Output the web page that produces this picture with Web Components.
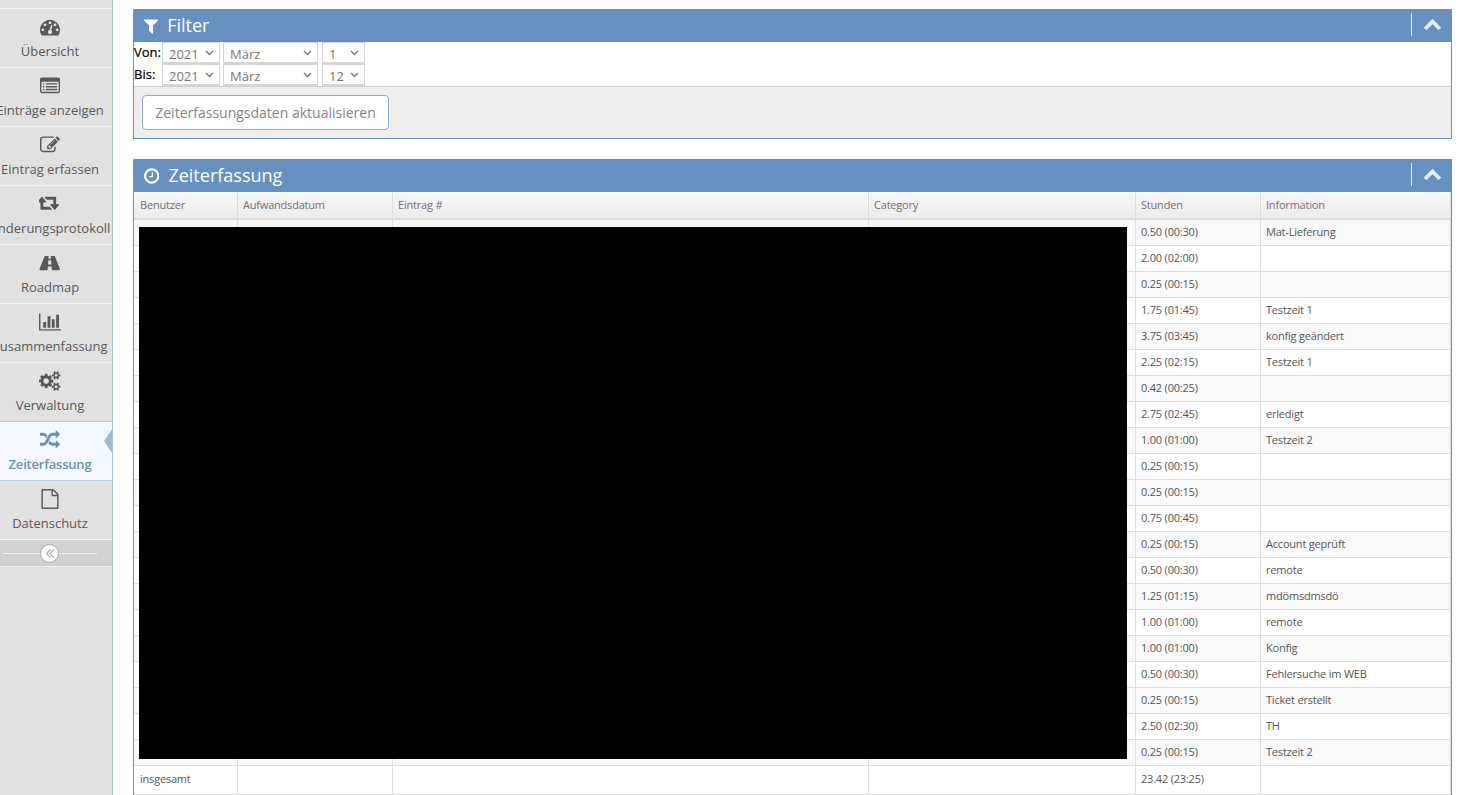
<!DOCTYPE html>
<html lang="de">
<head>
<meta charset="utf-8">
<title>Zeiterfassung</title>
<style>
  html, body { margin: 0; height: 100%; overflow: hidden; background: #fff; }
  body { font-family: "Open Sans", sans-serif; font-size: 13px; color: #393939; }
</style>
</head>
<body>
<app-layout>
  <side-bar slot="side">
    <nav-item icon="tachometer" label="Übersicht"></nav-item>
    <nav-item icon="listalt" label="Einträge anzeigen"></nav-item>
    <nav-item icon="edit" label="Eintrag erfassen"></nav-item>
    <nav-item icon="retweet" label="Änderungsprotokoll"></nav-item>
    <nav-item icon="road" label="Roadmap"></nav-item>
    <nav-item icon="chart" label="Zusammenfassung"></nav-item>
    <nav-item icon="cogs" label="Verwaltung"></nav-item>
    <nav-item icon="random" label="Zeiterfassung" active></nav-item>
    <nav-item icon="file" label="Datenschutz"></nav-item>
  </side-bar>
  <widget-box icon="filter" heading="Filter">
    <filter-form></filter-form>
  </widget-box>
  <widget-box icon="clock" heading="Zeiterfassung">
    <time-table></time-table>
  </widget-box>
</app-layout>

<script>
const ICONS = {
  tachometer: [1792, "M384 1152q0-53-37.5-90.5t-90.5-37.5-90.5 37.5-37.5 90.5 37.5 90.5 90.5 37.5 90.5-37.5 37.5-90.5zm192-448q0-53-37.5-90.5t-90.5-37.5-90.5 37.5-37.5 90.5 37.5 90.5 90.5 37.5 90.5-37.5 37.5-90.5zm428 481l101-382q6-26-7.5-48.5t-38.5-29.5-48 6.5-30 39.5l-101 382q-60 5-107 43.5t-63 98.5q-20 77 20 146t117 89 146-20 89-117q16-60-6-117t-72-91zm660-33q0-53-37.5-90.5t-90.5-37.5-90.5 37.5-37.5 90.5 37.5 90.5 90.5 37.5 90.5-37.5 37.5-90.5zm-640-640q0-53-37.5-90.5t-90.5-37.5-90.5 37.5-37.5 90.5 37.5 90.5 90.5 37.5 90.5-37.5 37.5-90.5zm448 192q0-53-37.5-90.5t-90.5-37.5-90.5 37.5-37.5 90.5 37.5 90.5 90.5 37.5 90.5-37.5 37.5-90.5zm320 448q0 261-141 483-19 29-54 29h-1402q-35 0-54-29-141-221-141-483 0-182 71-348t191-286 286-191 348-71 348 71 286 191 191 286 71 348z"],
  listalt: [1792, "M384 1184v64q0 13-9.5 22.5t-22.5 9.5h-64q-13 0-22.5-9.5t-9.5-22.5v-64q0-13 9.5-22.5t22.5-9.5h64q13 0 22.5 9.5t9.5 22.5zm0-256v64q0 13-9.5 22.5t-22.5 9.5h-64q-13 0-22.5-9.5t-9.5-22.5v-64q0-13 9.5-22.5t22.5-9.5h64q13 0 22.5 9.5t9.5 22.5zm0-256v64q0 13-9.5 22.5t-22.5 9.5h-64q-13 0-22.5-9.5t-9.5-22.5v-64q0-13 9.5-22.5t22.5-9.5h64q13 0 22.5 9.5t9.5 22.5zm1152 512v64q0 13-9.5 22.5t-22.5 9.5h-960q-13 0-22.5-9.5t-9.5-22.5v-64q0-13 9.5-22.5t22.5-9.5h960q13 0 22.5 9.5t9.5 22.5zm0-256v64q0 13-9.5 22.5t-22.5 9.5h-960q-13 0-22.5-9.5t-9.5-22.5v-64q0-13 9.5-22.5t22.5-9.5h960q13 0 22.5 9.5t9.5 22.5zm0-256v64q0 13-9.5 22.5t-22.5 9.5h-960q-13 0-22.5-9.5t-9.5-22.5v-64q0-13 9.5-22.5t22.5-9.5h960q13 0 22.5 9.5t9.5 22.5zm128 704v-832q0-13-9.5-22.5t-22.5-9.5h-1472q-13 0-22.5 9.5t-9.5 22.5v832q0 13 9.5 22.5t22.5 9.5h1472q13 0 22.5-9.5t9.5-22.5zm128-1088v1088q0 66-47 113t-113 47h-1472q-66 0-113-47t-47-113v-1088q0-66 47-113t113-47h1472q66 0 113 47t47 113z"],
  edit: [1792, "M888 1184l116-116-152-152-116 116v56h96v96h56zm440-720q-16-16-33 1l-350 350q-17 17-1 33t33-1l350-350q17-17 1-33zm80 594v190q0 119-84.5 203.5t-203.5 84.5h-832q-119 0-203.5-84.5t-84.5-203.5v-832q0-119 84.5-203.5t203.5-84.5h832q63 0 117 25 15 7 18 23 3 17-9 29l-49 49q-14 14-32 8-23-6-45-6h-832q-66 0-113 47t-47 113v832q0 66 47 113t113 47h832q66 0 113-47t47-113v-126q0-13 9-22l64-64q15-15 35-7t20 29zm-96-738l288 288-672 672h-288v-288zm444 132l-92 92-288-288 92-92q28-28 68-28t68 28l152 152q28 28 28 68t-28 68z"],
  retweet: [1920, "M1152 1376q0 13-9.5 22.5t-22.5 9.5h-960q-8 0-13.5-2t-9-7-5.5-8-3-11.5-1-11.5v-600h-192q-26 0-45-19t-19-45q0-24 15-41l320-384q19-22 49-22t49 22l320 384q15 17 15 41 0 26-19 45t-45 19h-192v384h576q16 0 25 11l160 192q7 10 7 21zm640-416q0 24-15 41l-320 384q-20 23-49 23t-49-23l-320-384q-15-17-15-41 0-26 19-45t45-19h192v-384h-576q-16 0-25-12l-160-192q-7-9-7-20 0-13 9.5-22.5t22.5-9.5h960q8 0 13.5 2t9 7 5.5 8 3 11.5 1 11.5v600h192q26 0 45 19t19 45z"],
  road: [1920, "M1111 1000v-4l-24-320q-1-13-11-22.5t-23-9.5h-186q-13 0-23 9.5t-11 22.5l-24 320v4q-1 12 8 20t21 8h244q12 0 21-8t8-20zm759 467q0 73-46 73h-704q13 0 22-9.5t8-22.5l-20-256q-1-13-11-22.5t-23-9.5h-272q-13 0-23 9.5t-11 22.5l-20 256q-1 13 8 22.5t22 9.5h-704q-46 0-46-73 0-54 26-116l417-1044q8-19 26-33t38-14h339q-13 0-23 9.5t-11 22.5l-15 192q-1 14 8 23t22 9h166q13 0 22-9t8-23l-15-192q-1-13-11-22.5t-23-9.5h339q20 0 38 14t26 33l417 1044q26 62 26 116z"],
  chart: [2048, "M640 896v512h-256v-512h256zm384-512v1024h-256v-1024h256zm1024 1152v128h-2048v-1536h128v1408h1920zm-640-896v768h-256v-768h256zm384-384v1152h-256v-1152h256z"],
  cogs: [1920, "M896 896q0-106-75-181t-181-75-181 75-75 181 75 181 181 75 181-75 75-181zm768 512q0-52-38-90t-90-38-90 38-38 90q0 53 37.5 90.5t90.5 37.5 90.5-37.5 37.5-90.5zm0-1024q0-52-38-90t-90-38-90 38-38 90q0 53 37.5 90.5t90.5 37.5 90.5-37.5 37.5-90.5zm-384 421v185q0 10-7 19.5t-16 10.5l-155 24q-11 35-32 76 34 48 90 115 7 11 7 20 0 12-7 19-23 30-82.5 89.5t-78.5 59.5q-11 0-21-7l-115-90q-37 19-77 31-11 108-23 155-7 24-30 24h-186q-11 0-20-7.5t-10-17.5l-23-153q-34-10-75-31l-118 89q-7 7-20 7-11 0-21-8-144-133-144-160 0-9 7-19 10-14 41-53t47-61q-23-44-35-82l-152-24q-10-1-17-9.5t-7-19.5v-185q0-10 7-19.5t16-10.5l155-24q11-35 32-76-34-48-90-115-7-11-7-20 0-12 7-20 22-30 82-89t79-59q11 0 21 7l115 90q34-18 77-32 11-108 23-154 7-24 30-24h186q11 0 20 7.5t10 17.5l23 153q34 10 75 31l118-89q8-7 20-7 11 0 21 8 144 133 144 160 0 8-7 19-12 16-42 54t-45 60q23 48 34 82l152 23q10 2 17 10.5t7 19.5zm640 533v140q0 16-149 31-12 27-30 52 51 113 51 138 0 4-4 7-122 71-124 71-8 0-46-47t-52-68q-20 2-30 2t-30-2q-14 21-52 68t-46 47q-2 0-124-71-4-3-4-7 0-25 51-138-18-25-30-52-149-15-149-31v-140q0-16 149-31 13-29 30-52-51-113-51-138 0-4 4-7 4-2 35-20t59-34 30-16q8 0 46 46.5t52 67.5q20-2 30-2t30 2q51-71 92-112l6-2q4 0 124 70 4 3 4 7 0 25-51 138 17 23 30 52 149 15 149 31zm0-1024v140q0 16-149 31-12 27-30 52 51 113 51 138 0 4-4 7-122 71-124 71-8 0-46-47t-52-68q-20 2-30 2t-30-2q-14 21-52 68t-46 47q-2 0-124-71-4-3-4-7 0-25 51-138-18-25-30-52-149-15-149-31v-140q0-16 149-31 13-29 30-52-51-113-51-138 0-4 4-7 4-2 35-20t59-34 30-16q8 0 46 46.5t52 67.5q20-2 30-2t30 2q51-71 92-112l6-2q4 0 124 70 4 3 4 7 0 25-51 138 17 23 30 52 149 15 149 31z"],
  random: [1792, "M666 481q-60 92-137 273-22-45-37-72.5t-40.5-63.5-51-56.5-63-35-81.5-14.5h-224q-14 0-23-9t-9-23v-192q0-14 9-23t23-9h224q250 0 410 225zm1126 799q0 14-9 23l-320 320q-9 9-23 9-13 0-22.5-9.5t-9.5-22.5v-192q-32 0-85 .5t-81 1-73-1-71-5-64-10.5-63-18.5-58-28.5-59-40-55-53.5-56-69.5q59-93 136-273 22 45 37 72.5t40.5 63.5 51 56.5 63 35 81.5 14.5h256v-192q0-14 9-23t23-9q12 0 24 10l319 319q9 9 9 23zm0-896q0 14-9 23l-320 320q-9 9-23 9-13 0-22.5-9.5t-9.5-22.5v-192h-256q-48 0-87 15t-69 45-51 61.5-45 77.5q-32 62-78 171-29 66-49.5 111t-54 105-64 100-74 83-90 68.5-106.5 42-128 16.5h-224q-14 0-23-9t-9-23v-192q0-14 9-23t23-9h224q48 0 87-15t69-45 51-61.5 45-77.5q32-62 78-171 29-66 49.5-111t54-105 64-100 74-83 90-68.5 106.5-42 128-16.5h256v-192q0-14 9-23t23-9q12 0 24 10l319 319q9 9 9 23z"],
  file: [1792, "M1596 380q28 28 48 76t20 88v1152q0 40-28 68t-68 28h-1344q-40 0-68-28t-28-68v-1600q0-40 28-68t68-28h896q40 0 88 20t76 48zm-444-244v376h376q-10-29-22-41l-313-313q-12-12-41-22zm384 1528v-1024h-416q-40 0-68-28t-28-68v-416h-768v1536h1280z"],
  filter: [1792, "M1595 295q17 41-14 70l-493 493v742q0 42-39 59-13 5-25 5-27 0-45-19l-256-256q-19-19-19-45v-486l-493-493q-31-29-14-70 17-39 59-39h1280q42 0 59 39z", 1408],
  clock: [1792, "M1024 544v448q0 14-9 23t-23 9h-320q-14 0-23-9t-9-23v-64q0-14 9-23t23-9h224v-352q0-14 9-23t23-9h64q14 0 23 9t9 23zm416 352q0-148-73-273t-198-198-273-73-273 73-198 198-73 273 73 273 198 198 273 73 273-73 198-198 73-273zm224 0q0 209-103 385.5t-279.5 279.5-385.5 103-385.5-103-279.5-279.5-103-385.5 103-385.5 279.5-279.5 385.5-103 385.5 103 279.5 279.5 103 385.5z", 1536],
  up: [1792, "M1683 1331l-166 165q-19 19-45 19t-45-19l-531-531-531 531q-19 19-45 19t-45-19l-166-165q-19-19-19-45.5t19-45.5l742-741q19-19 45-19t45 19l742 741q19 19 19 45.5t-19 45.5z"],
};

// adv is the glyph's own advance, so header titles start where the icon font would put them
function svgIcon(name, size) {
  const [w, d, adv] = ICONS[name];
  const box = adv || w;
  const x = (w - box) / 2;
  return `<svg width="${box * size / 1792}" height="${size}" viewBox="${x} 0 ${box} 1792" fill="currentColor" aria-hidden="true"><path d="${d}"/></svg>`;
}

customElements.define("app-layout", class extends HTMLElement {
  constructor() {
    super();
    this.attachShadow({ mode: "open" }).innerHTML = `
      <style>
        :host { display: flex; height: 795px; overflow: hidden; }
        main { flex: 1; min-width: 0; display: flex; flex-direction: column; gap: 20px; padding: 9px 10px 0 20px; }
      </style>
      <slot name="side"></slot>
      <main><slot></slot></main>
    `;
  }
});

customElements.define("side-bar", class extends HTMLElement {
  constructor() {
    super();
    this.attachShadow({ mode: "open" }).innerHTML = `
      <style>
        :host { display: block; width: 112px; flex: none; background: #e1e1e1; border-right: 1px solid #a9c2da; padding-top: 8px; }
        .top { height: 1px; background: #f2f2f2; }
        .collapse { position: relative; height: 26px; background: #d1d1d1; border-bottom: 1px solid #f0f0f0; display: flex; align-items: center; justify-content: center; padding-right: 13px; }
        .collapse::before { content: ""; position: absolute; left: 3px; right: 15px; top: 13px; height: 1px; background: #f0f0f0; }
        .toggle { position: relative; width: 19px; height: 19px; border-radius: 50%; background: #fff; border: 1px solid #a9a9a9; box-sizing: border-box; color: #aaa; display: flex; align-items: center; justify-content: center; }
      </style>
      <div class="top"></div>
      <slot></slot>
      <div class="collapse">
        <div class="toggle">
          <svg width="8" height="9" viewBox="45 496 966 998" preserveAspectRatio="none" fill="currentColor" aria-hidden="true"><path d="M627 1411q0 13-10 23l-50 50q-10 10-23 10t-23-10l-466-466q-10-10-10-23t10-23l466-466q10-10 23-10t23 10l50 50q10 10 10 23t-10 23l-393 393 393 393q10 10 10 23zm384 0q0 13-10 23l-50 50q-10 10-23 10t-23-10l-466-466q-10-10-10-23t10-23l466-466q10-10 23-10t23 10l50 50q10 10 10 23t-10 23l-393 393 393 393q10 10 10 23z"/></svg>
        </div>
      </div>
    `;
  }
});

customElements.define("nav-item", class extends HTMLElement {
  constructor() {
    super();
    const active = this.hasAttribute("active");
    this.attachShadow({ mode: "open" }).innerHTML = `
      <style>
        :host { display: block; }
        .item { position: relative; height: 58px; border-bottom: 1px solid #f2f2f2; overflow: hidden; color: #585858; font-family: "Open Sans", sans-serif; font-size: 13px; }
        /* 100px column: long labels spill past it and get cut at the sidebar edge */
        .col { width: 100px; display: flex; flex-direction: column; align-items: center; }
        .ic { height: 20px; margin-top: 8px; display: flex; justify-content: center; }
        .lb { margin-top: 5px; line-height: 18px; white-space: nowrap; }
        .active { background: #f3f9fe; color: #6590bf; font-weight: 600; border-bottom-color: #b9cfe3; box-shadow: 0 -1px 0 #b9cfe3; }
        .active .lb { letter-spacing: -0.2px; }
        .active::after { content: ""; position: absolute; right: 0; top: 7px; border: 12px solid transparent; border-right: 8px solid #9cbbd8; border-left: 0; }
      </style>
      <div class="item ${active ? "active" : ""}">
        <div class="col">
          <div class="ic">${svgIcon(this.getAttribute("icon"), 20)}</div>
          <div class="lb">${this.getAttribute("label")}</div>
        </div>
      </div>
    `;
  }
});

customElements.define("widget-box", class extends HTMLElement {
  constructor() {
    super();
    this.attachShadow({ mode: "open" }).innerHTML = `
      <style>
        :host { display: block; flex: none; font-family: "Open Sans", sans-serif; }
        header { height: 33px; background: #6590bf; color: #fff; display: flex; align-items: center; padding-left: 11px; }
        .ttl { font-size: 18px; line-height: 33px; margin-left: 9px; }
        .tool { margin-left: auto; margin-bottom: 2px; width: 40px; height: 23px; border-left: 1px solid #e8eff6; display: flex; align-items: center; justify-content: center; }
        .tool svg { color: #e4edf5; margin-top: -2px; }
        .body { border: 1px solid #6590bf; border-top: 0; }
      </style>
      <header>
        ${svgIcon(this.getAttribute("icon"), 18)}
        <span class="ttl">${this.getAttribute("heading")}</span>
        <div class="tool">${svgIcon("up", 19)}</div>
      </header>
      <div class="body"><slot></slot></div>
    `;
  }
});

customElements.define("date-select", class extends HTMLElement {
  constructor() {
    super();
    this.attachShadow({ mode: "open" }).innerHTML = `
      <style>
        :host { display: block; position: relative; }
        select { display: block; box-sizing: border-box; width: ${this.getAttribute("w")}px; height: 22px; padding: 2px 0 0 6px; border: 1px solid #d5d5d5; border-bottom-width: 2px; border-radius: 0; background: #fff; color: #777; font: 13px "Open Sans", sans-serif; appearance: none; }
        svg { position: absolute; right: 6px; top: 8px; pointer-events: none; }
      </style>
      <select><option>${this.getAttribute("value")}</option></select>
      <svg width="9" height="6" viewBox="0 0 9 6" fill="none" stroke="#777" stroke-width="1.4"><path d="M1 1l3.5 3.5L8 1"/></svg>
    `;
  }
});

customElements.define("filter-form", class extends HTMLElement {
  constructor() {
    super();
    const row = (label, day) => `
      <div class="row">
        <span class="lb">${label}</span>
        <date-select w="58" value="2021"></date-select>
        <date-select w="95" value="März" style="margin-left:3px"></date-select>
        <date-select w="43" value="${day}" style="margin-left:4px"></date-select>
      </div>`;
    this.attachShadow({ mode: "open" }).innerHTML = `
      <style>
        :host { display: block; font-family: "Open Sans", sans-serif; }
        .rows { height: 44px; }
        .row { display: flex; height: 22px; align-items: flex-start; }
        .lb { width: 28px; color: #000; font-size: 13px; line-height: 20px; -webkit-text-stroke: 0.2px #000; }
        .foot { height: 52px; background: #eee; border-top: 1px solid #d0d0d0; padding: 8px 0 0 8px; box-sizing: border-box; }
        button { box-sizing: border-box; width: 247px; height: 35px; padding: 0; background: #fff; border: 1px solid #8eaccb; border-radius: 4px; color: #858585; font: 14px "Open Sans", sans-serif; }
      </style>
      <div class="rows">${row("Von:", "1")}${row("Bis:", "12")}</div>
      <div class="foot"><button>Zeiterfassungsdaten aktualisieren</button></div>
    `;
  }
});

customElements.define("time-table", class extends HTMLElement {
  constructor() {
    super();
    const rows = [
      ["0.50 (00:30)", "Mat-Lieferung"], ["2.00 (02:00)", ""], ["0.25 (00:15)", ""],
      ["1.75 (01:45)", "Testzeit 1"], ["3.75 (03:45)", "konfig geändert"], ["2.25 (02:15)", "Testzeit 1"],
      ["0.42 (00:25)", ""], ["2.75 (02:45)", "erledigt"], ["1.00 (01:00)", "Testzeit 2"],
      ["0.25 (00:15)", ""], ["0.25 (00:15)", ""], ["0.75 (00:45)", ""],
      ["0.25 (00:15)", "Account geprüft"], ["0.50 (00:30)", "remote"], ["1.25 (01:15)", "mdömsdmsdö"],
      ["1.00 (01:00)", "remote"], ["1.00 (01:00)", "Konfig"], ["0.50 (00:30)", "Fehlersuche im WEB"],
      ["0.25 (00:15)", "Ticket erstellt"], ["2.50 (02:30)", "TH"], ["0.25 (00:15)", "Testzeit 2"],
    ];
    const tr = (r) => `<tr><td></td><td></td><td></td><td></td><td>${r[0]}</td><td>${r[1]}</td></tr>`;
    this.attachShadow({ mode: "open" }).innerHTML = `
      <style>
        :host { display: block; position: relative; font-family: "Open Sans", sans-serif; }
        table { width: 100%; table-layout: fixed; border-collapse: separate; border-spacing: 0; font-size: 11px; letter-spacing: -0.2px; color: #555; }
        th, td { box-sizing: border-box; padding: 0 0 3px 5px; text-align: left; border-right: 1px solid #ddd; border-bottom: 1px solid #ddd; height: 26px; font-weight: 400; }
        th { height: 28px; padding-bottom: 2px; background: linear-gradient(#f8f8f8, #ececec); color: #707070; border-bottom: 2px solid #ddd; }
        th:first-child, td:first-child { padding-left: 6px; }
        tbody tr:nth-child(odd) td { background: #f9f9f9; }
        tr.sum td { height: 29px; padding-bottom: 4px; background: #fff !important; }
        .mask { position: absolute; left: 5px; top: 35px; width: 988px; height: 532px; background: #000; }
      </style>
      <table>
        <colgroup><col style="width:104px"><col style="width:155px"><col style="width:476px"><col style="width:267px"><col style="width:125px"><col></colgroup>
        <thead><tr><th>Benutzer</th><th>Aufwandsdatum</th><th>Eintrag #</th><th>Category</th><th>Stunden</th><th>Information</th></tr></thead>
        <tbody>
          ${rows.map(tr).join("")}
          <tr class="sum"><td>insgesamt</td><td></td><td></td><td></td><td>23.42 (23:25)</td><td></td></tr>
        </tbody>
      </table>
      <div class="mask"></div>
    `;
  }
});
</script>
</body>
</html>
